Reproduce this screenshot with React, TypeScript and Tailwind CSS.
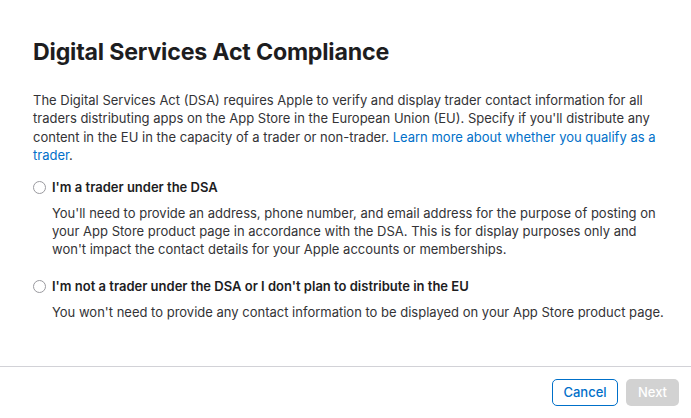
import React, { useState } from "react";

export default function App() {
  const [choice, setChoice] = useState<string | null>(null);

  const options = [
    {
      id: "trader",
      label: "I'm a trader under the DSA",
      desc: "You'll need to provide an address, phone number, and email address for the purpose of posting on your App Store product page in accordance with the DSA. This is for display purposes only and won't impact the contact details for your Apple accounts or memberships.",
    },
    {
      id: "non-trader",
      label: "I'm not a trader under the DSA or I don't plan to distribute in the EU",
      desc: "You won't need to provide any contact information to be displayed on your App Store product page.",
    },
  ];

  return (
    <div className="w-[691px] h-[418px] bg-white flex flex-col font-['Inter',sans-serif] text-[#1d1d1f]">
      {/* Body */}
      <div className="flex-1 pl-[33px] pr-[22px] pt-[38px]">
        <h1 className="text-[23.2px] leading-[28px] font-bold tracking-[-0.2px] text-[#1d1d1f]">
          Digital Services Act Compliance
        </h1>
        <p className="mt-[25px] text-[13px] leading-[18.4px] text-[#333336]">
          The Digital Services Act (DSA) requires Apple to verify and display trader contact information for all
          traders distributing apps on the App Store in the European Union (EU). Specify if you'll distribute any
          content in the EU in the capacity of a trader or non-trader.{" "}
          <a href="#" className="text-[#0070c9]">
            Learn more about whether you qualify as a
          </a>{" "}
          <a href="#" className="text-[#0070c9]">
            trader
          </a>
          .
        </p>

        <div className="mt-[13px] flex flex-col gap-[18px]">
          {options.map((opt) => (
            <label key={opt.id} className="flex items-start gap-[6px] cursor-pointer">
              <input
                type="radio"
                name="dsa"
                checked={choice === opt.id}
                onChange={() => setChoice(opt.id)}
                className="appearance-none mt-[3px] w-[13px] h-[13px] shrink-0 rounded-full border border-[#9a9a9f] bg-white checked:border-[4px] checked:border-[#0070c9]"
              />
              <div className="flex flex-col">
                <span className="text-[13px] leading-[18px] font-semibold text-[#1d1d1f]">{opt.label}</span>
                <span className="mt-[8px] text-[13px] leading-[18.4px] text-[#333336]">{opt.desc}</span>
              </div>
            </label>
          ))}
        </div>
      </div>

      {/* Footer */}
      <div className="border-t border-[#d2d2d7] h-[52px] flex items-center justify-end gap-[8px] pr-[12px]">
        <button
          type="button"
          className="h-[27px] w-[66px] rounded-[5px] border border-[#0070c9] text-[13px] font-medium text-[#0070c9] bg-white"
        >
          Cancel
        </button>
        <button
          type="button"
          disabled
          className="h-[27px] w-[53px] rounded-[5px] bg-[#d2d2d2] text-[13px] font-medium text-white"
        >
          Next
        </button>
      </div>
    </div>
  );
}
